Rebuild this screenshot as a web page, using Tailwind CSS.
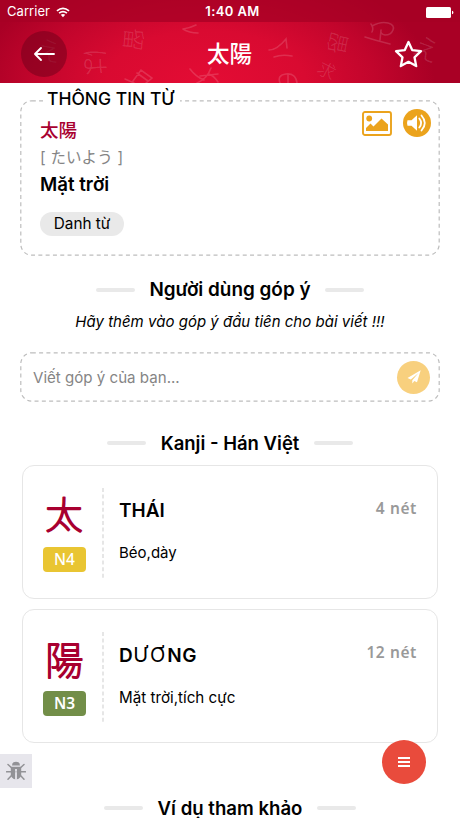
<!DOCTYPE html>
<html lang="vi">
<head>
<meta charset="utf-8">
<title>太陽</title>
<script src="https://cdn.jsdelivr.net/npm/@tailwindcss/browser@4"></script>
</head>
<body class="bg-white">
<div class="relative flex h-[818px] w-[460px] flex-col overflow-hidden bg-white font-['Inter','Noto_Sans_CJK_JP',sans-serif] text-black">
  <header class="relative h-[83px] shrink-0 overflow-hidden bg-[#a90025] bg-[radial-gradient(ellipse_200px_105px_at_205px_83px,#e40c34_0%,#d90a31_50%,#c2052c_85%,#a90025_115%)] text-white">
    <div class="absolute inset-x-0 top-0 h-[22px] bg-[#a70024]/75"></div>
    <svg aria-hidden="true" class="absolute inset-0" width="460" height="83" fill="#fff" fill-opacity=".15" font-family="Noto Sans CJK JP" font-weight="300">
      <text x="36" y="60" font-size="26" transform="rotate(15 48 50)">え</text>
      <text x="81" y="72" font-size="28" transform="rotate(88 95 62)">は</text>
      <text x="122" y="47" font-size="23" transform="rotate(95 133 39)">留</text>
      <g fill="none" stroke="#fff" stroke-opacity=".15" stroke-width="1.600" stroke-linecap="round">
        <path d="m125 79 9 4M133 81l8-11 11 8-6 5M137 73l11 8"/>
        <path d="M196 25q-6 3-13 4M183 29q6 4 15 4"/>
        <path d="M190 69q6 8 14 11M211 68q-4 11-14 15M209 74q5 2 9 8M200 76l18-2"/>
        <path d="M280 83q-3-8 6-9 10-1 11 9M288 75v8"/>
        <path d="M269 50q8 0 17-11l1 9M274 57q8-3 18-1"/>
        <path d="M371 24q3 4 1 8M372 26q9-5 16-3 7 2 5 7-2 5-8 5-5-1-4-5M365 37q9 3 25 7M381 30l-1 10"/>
      </g>
      <text x="327" y="51" font-size="22" transform="rotate(-78 338 43)">留</text>
      <text x="318" y="77" font-size="18" transform="rotate(28 327 70)">求</text>
      <text x="413" y="59" font-size="27" transform="rotate(25 427 49)">え</text>
    </svg>
    <div class="relative flex h-6 items-center justify-between pl-[7px] pr-[6px]">
      <div class="flex w-[100px] items-center gap-[6px] text-[13px] tracking-[.05px]">Carrier
        <svg width="14" height="11" viewBox="0 0 15 11" fill="none" stroke="#fff" stroke-width="1.800"><path d="M1 3.800Q7.500-1.700 14 3.800M3.300 6.200Q7.500 2.700 11.700 6.200"/><path d="M7.500 10.700 5.100 8Q7.500 6.200 9.900 8Z" fill="#fff" stroke="none"/></svg>
      </div>
      <div class="translate-x-[2px] text-[13px] font-semibold tracking-[.4px]">1:40 AM</div>
      <div class="flex w-[100px] justify-end"><svg width="28" height="11" viewBox="0 0 28 11" fill="#fff"><rect width="25" height="11" rx="1.500"/><path d="M26 3.700q1.400.3 1.400 1.800T26 7.300Z"/></svg></div>
    </div>
    <div class="relative flex h-[59px] items-center justify-between pl-[21px] pr-[37px]">
      <div class="flex size-[46px] items-center justify-center rounded-full bg-[#74001c]/55">
        <svg width="22" height="16" viewBox="0 0 22 16" fill="none" stroke="#fff" stroke-width="1.900" stroke-linecap="round" stroke-linejoin="round"><path d="M21 8H2M8 2 2 8l6 6"/></svg>
      </div>
      <h1 class="absolute left-[207px] top-[13px] text-[22.500px] leading-[34px] font-medium">太陽</h1>
      <svg width="29" height="28" viewBox="0 0 29 28" fill="none" stroke="#fff" stroke-width="2.300" stroke-linejoin="round"><path d="m14.500 2 3.700 8.100 8.800 1.100-6.500 6.100 1.700 8.800-7.700-4.300-7.700 4.300 1.700-8.800L2 11.200l8.800-1.100Z"/></svg>
    </div>
  </header>

  <main class="flex flex-col">
    <section class="relative ml-5 mt-[17px] h-[156px] w-[420px] pl-[20px]">
      <svg aria-hidden="true" class="absolute inset-0" width="420" height="156" fill="none" stroke="#bdbdbd"><rect x=".8" y=".8" width="418.400" height="154.400" rx="11" stroke-width="1.200" stroke-dasharray="4 3.300"/></svg>
      <h2 class="absolute left-[23px] top-[-13px] w-[137px] bg-white pl-1 text-[17.500px] leading-[24px] font-medium whitespace-nowrap">THÔNG TIN TỪ</h2>
      <div class="relative flex flex-col items-start">
        <div class="mt-[16px] text-[18.500px] leading-[28px] font-medium text-[#a80030]">太陽</div>
        <div class="text-[15.500px] leading-[28px] tracking-[.2px] text-[#858585] whitespace-nowrap">[ たいよう ]</div>
        <div class="text-[18.700px] leading-[26px] font-semibold">Mặt trời</div>
        <div class="mt-[14px] flex h-6 w-[84px] items-center justify-center rounded-full bg-[#e9e9e9] text-[15.300px]">Danh từ</div>
      </div>
      <div class="absolute right-[9px] top-[9px] flex items-center gap-[11px] text-[#eba31c]">
        <svg width="30" height="25" viewBox="0 0 30 25" fill="currentColor"><rect x="1" y="1" width="28" height="23" rx="2" fill="none" stroke="currentColor" stroke-width="1.900"/><circle cx="7.200" cy="7.500" r="2.900"/><path d="M4 20v-3l4.500-4.500 3 3L19.500 7.500l6.500 6V20Z"/></svg>
        <svg width="28" height="28" viewBox="0 0 28 28"><circle cx="14" cy="14" r="14" fill="currentColor"/><path d="M4.500 11.200h4l5.500-5v15.600l-5.500-5h-4q-1-2.800 0-5.600Z" fill="#fff"/><path d="M16.300 9.500q3.600 4.500 0 9M18.500 6.500q6.600 7.500 0 15" fill="none" stroke="#fff" stroke-width="1.800" stroke-linecap="round"/></svg>
      </div>
    </section>

    <div class="mt-[19px] flex h-[30px] items-center justify-center gap-[14px]"><i class="h-1 w-[39px] rounded-full bg-[#e9e9e9]"></i><h2 class="text-[18.900px] font-semibold whitespace-nowrap">Người dùng góp ý</h2><i class="h-1 w-[39px] rounded-full bg-[#e9e9e9]"></i></div>
    <p class="mt-[5px] text-center text-[15px] leading-6 italic whitespace-nowrap">Hãy thêm vào góp ý đầu tiên cho bài viết !!!</p>

    <div class="relative ml-5 mt-[18px] flex h-[50px] w-[420px] items-center justify-between pl-[13px] pr-[10px]">
      <svg aria-hidden="true" class="absolute inset-0" width="420" height="50" fill="none" stroke="#bdbdbd"><rect x=".8" y=".8" width="418.400" height="48.400" rx="11" stroke-width="1.200" stroke-dasharray="4 3.300"/></svg>
      <span class="relative top-px text-[15.100px] text-[#858585]">Viết góp ý của bạn...</span>
      <span class="relative flex size-[33px] items-center justify-center rounded-full bg-[#f8d07e]"><svg width="14" height="14" viewBox="0 0 14 14" fill="#fff"><path d="M13.700.3.500 8l3.300 1.500L11.500 3 5.300 10.200v3.300l2-2.400 2.700 1.200Z"/></svg></span>
    </div>

    <div class="mt-[26px] flex h-[30px] items-center justify-center gap-[15px]"><i class="h-1 w-[39px] rounded-full bg-[#e9e9e9]"></i><h2 class="relative top-px text-[18.500px] font-semibold whitespace-nowrap">Kanji - Hán Việt</h2><i class="h-1 w-[39px] rounded-full bg-[#e9e9e9]"></i></div>

    <article class="ml-[22px] mt-[7px] flex h-[134px] w-[416px] rounded-xl border border-[#e6e6e6] px-5 py-[22px]">
      <div class="flex w-[43px] flex-col items-center">
        <svg class="mt-[6px] overflow-visible" width="43" height="42"><text x="2.500" y="34.500" font-size="37" font-family="Noto Sans CJK JP" font-weight="100" fill="#a80030" stroke="#a80030" stroke-width="2.100" stroke-linejoin="round">太</text></svg>
        <span class="mt-[11px] flex h-[25px] w-full items-center justify-center rounded bg-[#e9c532] font-['Noto_Sans'] text-[15.500px] font-medium text-white">N4</span>
      </div>
      <svg class="ml-[16px]" width="2" height="91"><path d="M1 0v91" stroke="#dcdcdc" stroke-width="1.400" stroke-dasharray="4 2.600"/></svg>
      <div class="ml-[15px] flex flex-col">
        <h3 class="mt-[10px] text-[19px] leading-[26px] font-semibold">THÁI</h3>
        <p class="mt-[17px] text-[15px] leading-6 whitespace-nowrap">Béo,dày</p>
      </div>
      <span class="ml-auto mt-[8px] font-['Noto_Sans'] text-[15.500px] leading-6 font-semibold tracking-[.6px] text-[#999]">4 nét</span>
    </article>

    <article class="ml-[22px] mt-[10px] flex h-[134px] w-[416px] rounded-xl border border-[#e6e6e6] px-5 py-[22px]">
      <div class="flex w-[43px] flex-col items-center">
        <svg class="mt-[6px] overflow-visible" width="43" height="42"><text x="2.500" y="36" font-size="38" font-family="Noto Sans CJK JP" font-weight="100" fill="#a80030" stroke="#a80030" stroke-width="1.900" stroke-linejoin="round">陽</text></svg>
        <span class="mt-[11px] flex h-[25px] w-full items-center justify-center rounded bg-[#728e48] font-['Noto_Sans'] text-[15.500px] font-semibold text-white">N3</span>
      </div>
      <svg class="ml-[16px]" width="2" height="91"><path d="M1 0v91" stroke="#dcdcdc" stroke-width="1.400" stroke-dasharray="4 2.600"/></svg>
      <div class="ml-[15px] flex flex-col">
        <h3 class="mt-[10px] text-[19px] leading-[26px] font-semibold tracking-[.5px] whitespace-nowrap">D<span class="text-[20px] font-normal tracking-[2px]">ƯƠ</span>NG</h3>
        <p class="mt-[17px] text-[15.200px] leading-6 whitespace-nowrap">Mặt trời,tích cực</p>
      </div>
      <span class="ml-auto mt-[8px] font-['Noto_Sans'] text-[15.500px] leading-6 font-semibold tracking-[.6px] text-[#999]">12 nét</span>
    </article>

    <div class="mt-[50px] flex h-[30px] items-center justify-center gap-[15px]"><i class="h-1 w-[39px] rounded-full bg-[#e9e9e9]"></i><h2 class="relative top-px text-[18.600px] font-semibold whitespace-nowrap">Ví dụ tham khảo</h2><i class="h-1 w-[39px] rounded-full bg-[#e9e9e9]"></i></div>
  </main>

  <div class="absolute left-0 top-[754px] flex h-[34px] w-8 items-center justify-center bg-[#e7e6ec]">
    <svg width="20" height="20" viewBox="0 0 20 20" fill="#929296"><path d="M6 4.500a4 3.800 0 0 1 8 0Z"/><path d="M4.800 5.800h10.400v8.500q-1.200 3.700-4.500 4V8H9.300v10.300q-3.300-.3-4.500-4Z"/><path d="m2 3.500 3.500 3.200M18 3.500l-3.500 3.200M.5 10.800h19M5.500 14.500 2 18.200M14.500 14.500l3.500 3.700" stroke="#929296" stroke-width="1.500" fill="none" stroke-linecap="round"/><path d="M9.400 8h1.200v10H9.400z" fill="#e7e6ec"/></svg>
  </div>
  <button class="absolute left-[382px] top-[740px] flex size-[44px] items-center justify-center rounded-full bg-[#e94b3c]"><svg width="12" height="10" fill="#fff"><path d="M0 0h12v2H0zM0 4h12v2H0zM0 8h12v2H0z"/></svg></button>
</div>
</body>
</html>
